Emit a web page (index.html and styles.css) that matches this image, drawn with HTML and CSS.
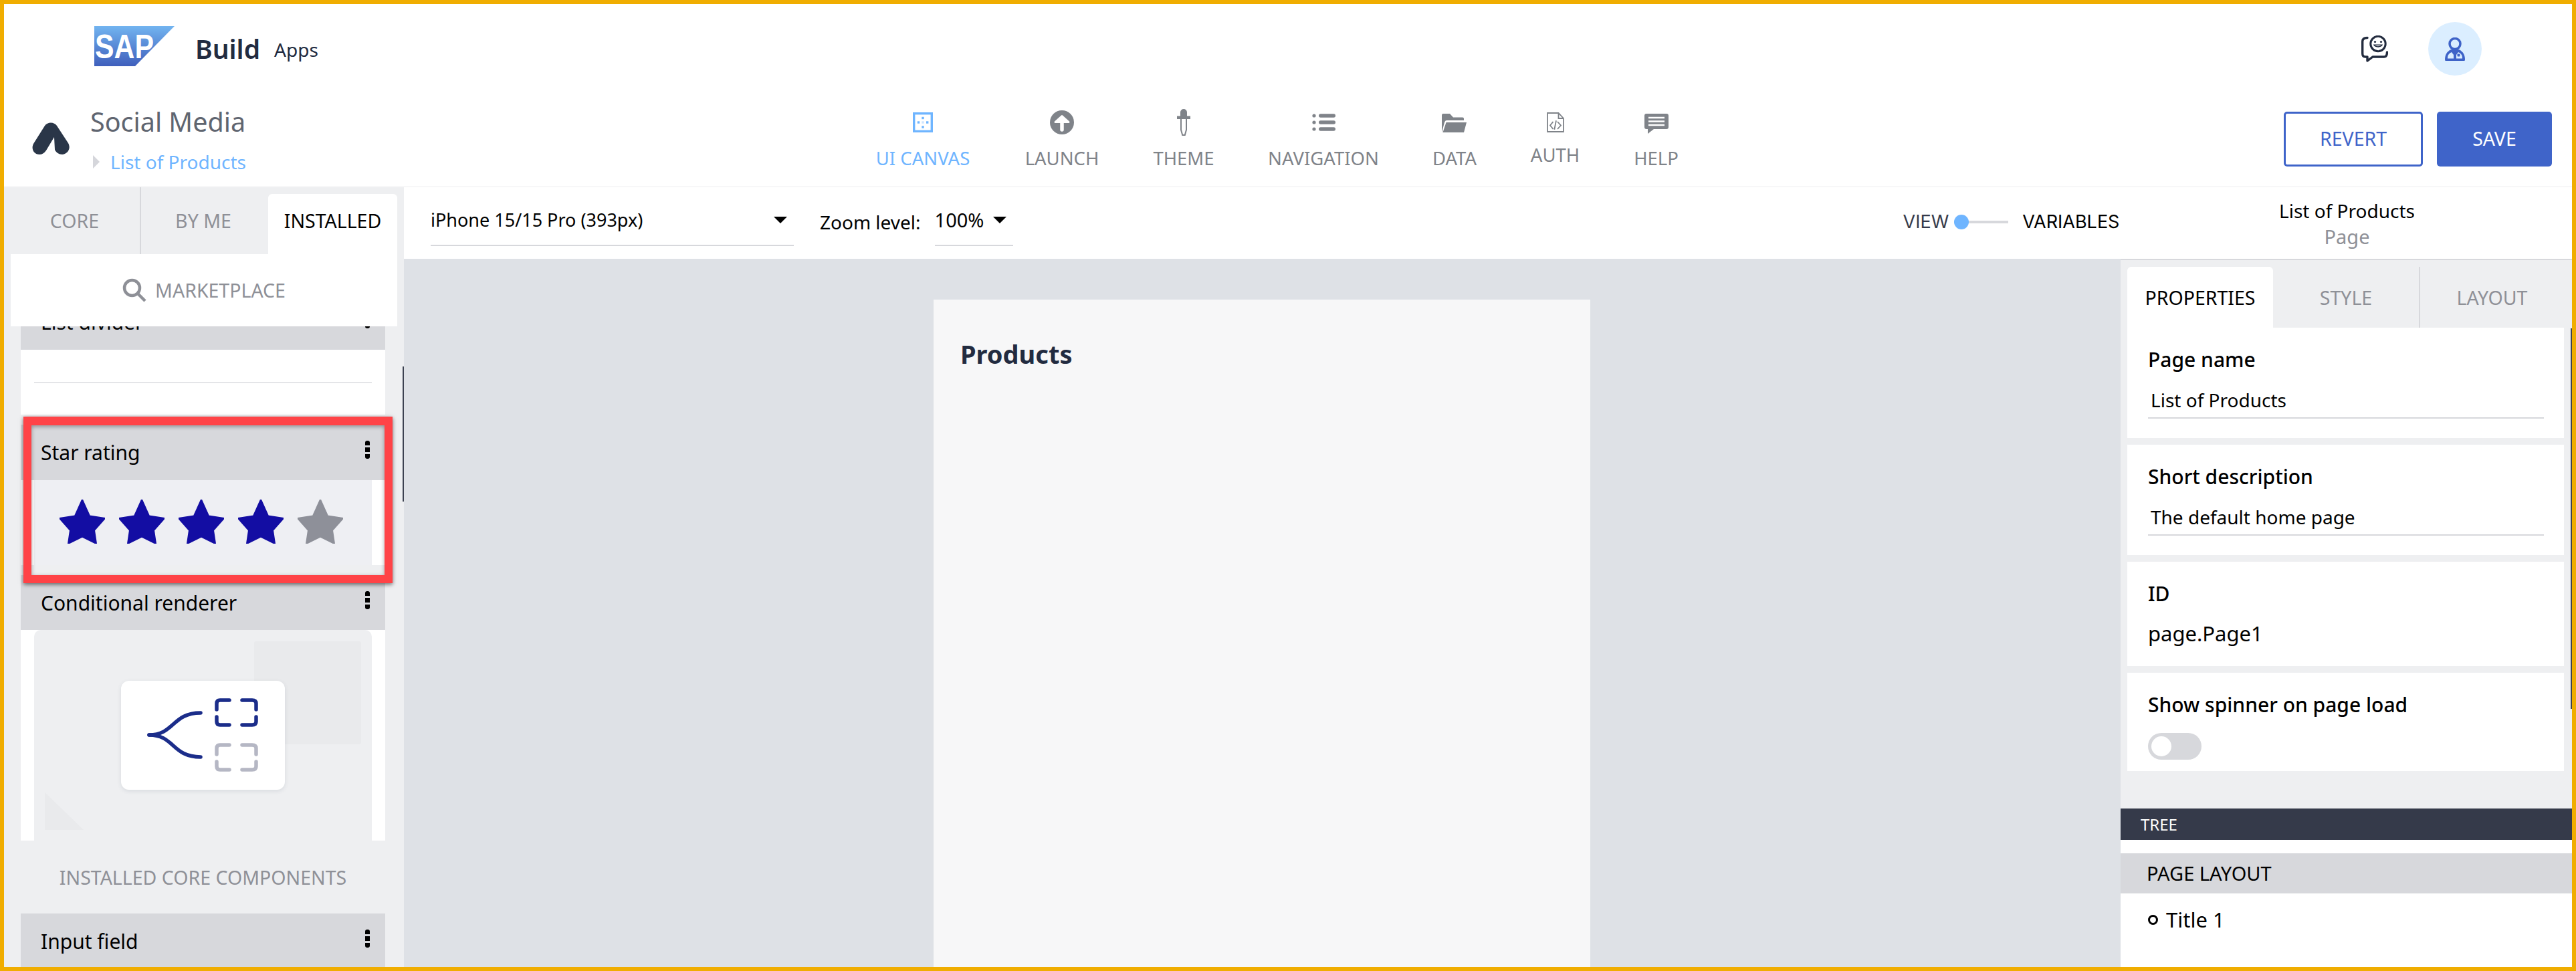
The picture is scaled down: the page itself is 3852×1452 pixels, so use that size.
FILE: index.html
```
<!DOCTYPE html>
<html lang="en">
<head>
<meta charset="utf-8">
<title>SAP Build Apps</title>
<link rel="stylesheet" href="styles.css">
</head>
<body>
<div class="app">
  <header class="brandbar">
    <svg class="sap-logo" viewBox="0 0 120 60" aria-hidden="true">
      <defs><linearGradient id="sapg" x1="0" y1="0" x2="0" y2="1"><stop offset="0" stop-color="#72b4f0"/><stop offset="1" stop-color="#3f5fbc"/></linearGradient></defs>
      <polygon points="0,0 120,0 61,60 0,60" fill="url(#sapg)"/>
      <text x="1" y="48" class="sap-text" textLength="88" lengthAdjust="spacingAndGlyphs">SAP</text>
    </svg>
    <span class="brand-build">Build</span>
    <span class="brand-apps">Apps</span>
    <svg class="chat-icon" viewBox="0 0 40 40" aria-hidden="true">
      <path d="M9 3.500 C4 3.500 1.700 5 1.700 9 V27 C1.700 30 3 32 6 32 H9 V38 L17 32 H34 C37 32 38.500 29 38.500 25" fill="none" stroke="#232c3f" stroke-width="3.400" stroke-linecap="round" stroke-linejoin="round"/>
      <circle cx="25" cy="12.500" r="11.200" fill="none" stroke="#232c3f" stroke-width="3"/>
      <circle cx="20.500" cy="9.500" r="1.600" fill="#232c3f"/><circle cx="29.500" cy="9.500" r="1.600" fill="#232c3f"/>
      <path d="M18 13.500 H32 C31 19 19 19 18 13.500 Z" fill="#232c3f"/>
      <path d="M20.500 15 H29.500 C28 16.500 22 16.500 20.500 15 Z" fill="#fff"/>
    </svg>
    <div class="avatar">
      <svg class="person-icon" viewBox="0 0 30 35" aria-hidden="true">
        <circle cx="15" cy="9.500" r="8" fill="none" stroke="#3e63c8" stroke-width="3.500"/>
        <path d="M1 35 Q0 35 0 33 C0 26 3 21 9 18 H21 C27 21 30 26 30 33 Q30 35 29 35 Z" fill="#3e63c8"/>
        <path d="M4 31.500 C4 26 6 24 10 22 L13 26 V31.500 Z" fill="#dbeeff"/>
        <path d="M17 26 L20 22 C24 24 26 26 26 31.500 H17 Z" fill="#dbeeff"/>
        <rect x="18.500" y="24.500" width="4" height="4" rx="1" fill="#3e63c8"/>
      </svg>
    </div>
  </header>

  <div class="projectbar">
    <svg class="app-logo" viewBox="0 0 56 48" aria-hidden="true">
      <path d="M19 5 C23 -1 33 -1 37 5 L54 31 C59 40 52 48 45 48 C40 48 36 45 34 41 L33 22 L21 42 C18 46 15 48 11 48 C3 48 -2 40 2 32 Z" fill="#2a3648"/>
    </svg>
    <div class="project-title">
      <div class="project-name">Social Media</div>
      <div class="project-page"><span class="crumb-arrow"></span><span>List of Products</span></div>
    </div>
    <nav class="mainnav">
      <a class="navitem navitem-canvas is-active">
        <svg class="navicon" width="30" height="30" viewBox="0 0 30 30" aria-hidden="true">
          <rect x="1.700" y="1.700" width="26.600" height="26.600" fill="#fff" stroke="#6fb5ff" stroke-width="3.400"/>
          <g fill="#6fb5ff">
            <rect x="13.300" y="6.800" width="3.400" height="3.400"/>
            <rect x="13.300" y="20.300" width="3.400" height="3.400"/>
            <rect x="6.800" y="13.300" width="3.400" height="3.400"/>
            <rect x="20" y="13.300" width="3.400" height="3.400"/>
          </g>
          <rect x="13.300" y="13.300" width="3.400" height="3.400" fill="#cfe5ff"/>
        </svg>
        <span>UI CANVAS</span>
      </a>
      <a class="navitem navitem-launch">
        <svg class="navicon" width="36" height="36" viewBox="0 0 36 36" aria-hidden="true">
          <circle cx="18" cy="18" r="18" fill="#7f8389"/>
          <path d="M18 8.500 L28 17.500 H8 Z" fill="#fff" stroke="#fff" stroke-width="3" stroke-linejoin="round"/>
          <path d="M18 15 V29" stroke="#fff" stroke-width="5.500" stroke-linecap="round"/>
          <path d="M12.500 19 L18 15 L23.500 19 Z" fill="#fff"/>
        </svg>
        <span>LAUNCH</span>
      </a>
      <a class="navitem navitem-theme">
        <svg class="navicon" width="20" height="40" viewBox="0 0 20 40" aria-hidden="true">
          <path d="M5 10.500 V5 A5 5 0 0 1 15 5 V10.500 H20 V15 H0 V10.500 Z" fill="#7f8389"/>
          <path d="M6 15 V31 L8.200 39 H11.800 L14 31 V15" fill="none" stroke="#7f8389" stroke-width="2"/>
        </svg>
        <span>THEME</span>
      </a>
      <a class="navitem navitem-nav">
        <svg class="navicon" width="35" height="26" viewBox="0 0 35 26" aria-hidden="true">
          <g fill="#7f8389">
            <circle cx="3" cy="3" r="2.600"/><rect x="10" y="0.300" width="25" height="5.400" rx="2.700"/>
            <circle cx="3" cy="13" r="2.600"/><rect x="10" y="10.300" width="25" height="5.400" rx="2.700"/>
            <circle cx="3" cy="23" r="2.600"/><rect x="10" y="20.300" width="25" height="5.400" rx="2.700"/>
          </g>
        </svg>
        <span>NAVIGATION</span>
      </a>
      <a class="navitem navitem-data">
        <svg class="navicon" width="38" height="28" viewBox="0 0 38 28" aria-hidden="true">
          <path d="M0 2 Q0 0 2 0 H12 L17 5.500 H31 Q33 5.500 33 7.500 V10 H7 Q5 10 4 13 L0 28 Z" fill="#7f8389"/>
          <path d="M6.500 13 H37 L33 28 H1.500 Z" fill="#7f8389"/>
        </svg>
        <span>DATA</span>
      </a>
      <a class="navitem navitem-auth">
        <svg class="navicon" width="26" height="30" viewBox="0 0 26 30" aria-hidden="true">
          <path d="M1 1 H17.500 L25 9 V29 H1 Z M17.500 1 V9 H25" fill="none" stroke="#7f8389" stroke-width="1.800"/>
          <path d="M9.500 14 L5 19.500 L9.500 25 M16 14 L21 19.500 L16 25 M14 12.300 L11.300 25.700" fill="none" stroke="#7f8389" stroke-width="1.800"/>
        </svg>
        <span>AUTH</span>
      </a>
      <a class="navitem navitem-help">
        <svg class="navicon" width="36" height="30" viewBox="0 0 36 30" aria-hidden="true">
          <path d="M3 0 H33 C35 0 36 1 36 3 V20 C36 22 35 23 33 23 H14 L5 30 V23 H3 C1 23 0 22 0 20 V3 C0 1 1 0 3 0 Z" fill="#7f8389"/>
          <path d="M6 6 H30 M6 11.500 H30 M6 17 H30" stroke="#fff" stroke-width="2.400"/>
        </svg>
        <span>HELP</span>
      </a>
    </nav>
    <div class="actions">
      <button class="btn btn-outline">REVERT</button>
      <button class="btn btn-solid">SAVE</button>
    </div>
  </div>

  <div class="work">
    <aside class="palette">
      <div class="palette-tabs">
        <div class="ptab ptab-core">CORE</div>
        <div class="ptab ptab-me">BY ME</div>
        <div class="ptab ptab-installed">INSTALLED</div>
      </div>
      <div class="marketplace">
        <svg class="search-icon" width="36" height="36" viewBox="0 0 36 36" aria-hidden="true">
          <circle cx="14.500" cy="14.500" r="11.500" fill="none" stroke="#8e9097" stroke-width="4.500"/>
          <path d="M23 23 L34 34" stroke="#8e9097" stroke-width="4.500"/>
        </svg>
        <span>MARKETPLACE</span>
      </div>
      <div class="palette-list">
        <div class="palette-scroll">
          <section class="comp">
            <div class="comp-head"><span>List divider</span><i class="kebab"></i></div>
            <div class="comp-body comp-body-divider"><hr class="divider-line"></div>
          </section>
          <section class="comp comp-star">
            <div class="highlight"></div>
            <div class="comp-head"><span>Star rating</span><i class="kebab"></i></div>
            <div class="comp-body">
              <div class="star-preview">
                <svg class="star" viewBox="0 0 68 66" aria-hidden="true"><path class="star-on" d="M34 0 L45 24.500 L68 28 L52 46 L55 66 L34 55.500 L13 66 L16 46 L0 28 L23 24.500 Z"/></svg>
                <svg class="star" viewBox="0 0 68 66" aria-hidden="true"><path class="star-on" d="M34 0 L45 24.500 L68 28 L52 46 L55 66 L34 55.500 L13 66 L16 46 L0 28 L23 24.500 Z"/></svg>
                <svg class="star" viewBox="0 0 68 66" aria-hidden="true"><path class="star-on" d="M34 0 L45 24.500 L68 28 L52 46 L55 66 L34 55.500 L13 66 L16 46 L0 28 L23 24.500 Z"/></svg>
                <svg class="star" viewBox="0 0 68 66" aria-hidden="true"><path class="star-on" d="M34 0 L45 24.500 L68 28 L52 46 L55 66 L34 55.500 L13 66 L16 46 L0 28 L23 24.500 Z"/></svg>
                <svg class="star" viewBox="0 0 68 66" aria-hidden="true"><path class="star-off" d="M34 0 L45 24.500 L68 28 L52 46 L55 66 L34 55.500 L13 66 L16 46 L0 28 L23 24.500 Z"/></svg>
              </div>
            </div>
          </section>
          <section class="comp comp-cond">
            <div class="comp-head comp-head-cond"><span>Conditional renderer</span><i class="kebab"></i></div>
            <div class="comp-body">
              <div class="cond-preview">
                <svg class="cond-art" width="505" height="314" viewBox="0 0 505 314" aria-hidden="true">
                  <rect x="329" y="17" width="160" height="154" rx="3" fill="#e9eaec"/>
                  <polygon points="16,243 16,299 74,299" fill="#e9eaec"/>
                </svg>
                <div class="cond-card">
                  <svg width="245" height="163" viewBox="0 0 245 163" aria-hidden="true">
                    <g fill="none" stroke-width="5.500" stroke-linecap="round">
                      <g stroke="#1b2d8a">
                        <path d="M42 81 C80 81 76 48 119 48"/>
                        <path d="M42 81 C80 81 76 114 119 114"/>
                        <path d="M162 29 H148 Q143 29 143 34 V43 M143 54 V61 Q143 66 148 66 H162 M181 29 H196 Q202 29 202 34 V43 M202 54 V61 Q202 66 196 66 H181"/>
                      </g>
                      <path stroke="#b5b7c4" d="M162 96 H148 Q143 96 143 101 V110 M143 121 V128 Q143 133 148 133 H162 M181 96 H196 Q202 96 202 101 V110 M202 121 V128 Q202 133 196 133 H181"/>
                    </g>
                  </svg>
                </div>
              </div>
            </div>
          </section>
          <div class="section-label">INSTALLED CORE COMPONENTS</div>
          <section class="comp">
            <div class="comp-head"><span>Input field</span><i class="kebab"></i></div>
          </section>
        </div>
      </div>
      <div class="palette-scrollbar"></div>
    </aside>

    <main class="editor">
      <div class="toolbar">
        <div class="select select-device"><span>iPhone 15/15 Pro (393px)</span><i class="caret"></i></div>
        <span class="zoom-label">Zoom level:</span>
        <div class="select select-zoom"><span>100%</span><i class="caret"></i></div>
        <div class="view-toggle">
          <span class="view-label">VIEW</span>
          <span class="slider"><i class="slider-dot"></i></span>
          <span class="vars-label">VARIABLES</span>
        </div>
        <div class="selection">
          <div class="selection-name">List of Products</div>
          <div class="selection-type">Page</div>
        </div>
      </div>
      <div class="stage">
        <div class="canvas">
          <div class="phone"><h1 class="phone-title">Products</h1></div>
        </div>
        <aside class="inspector">
          <div class="itabs">
            <div class="itab itab-on">PROPERTIES</div>
            <div class="itab itab-style">STYLE</div>
            <div class="itab itab-layout">LAYOUT</div>
          </div>
          <div class="cards">
            <div class="card card-name">
              <div class="card-label">Page name</div>
              <div class="field">List of Products</div>
            </div>
            <div class="card card-name">
              <div class="card-label">Short description</div>
              <div class="field">The default home page</div>
            </div>
            <div class="card card-id">
              <div class="card-label">ID</div>
              <div class="plain-value">page.Page1</div>
            </div>
            <div class="card card-spin">
              <div class="card-label">Show spinner on page load</div>
              <div class="toggle"><i class="knob"></i></div>
            </div>
          </div>
          <div class="tree">
            <div class="tree-bar">TREE</div>
            <div class="tree-head">PAGE LAYOUT</div>
            <div class="tree-row"><i class="tree-dot"></i><span>Title 1</span></div>
          </div>
          <div class="inspector-scrollbar"></div>
        </aside>
      </div>
    </main>
  </div>
</div>
</body>
</html>
```

FILE: styles.css
```
* { box-sizing: border-box; }
html, body { margin: 0; padding: 0; background: #fff; }
body { font-family: "Noto Sans", "Liberation Sans", sans-serif; color: #000; }

.app {
  width: 3852px;
  height: 1452px;
  border: 6px solid #f0ad00;
  overflow: hidden;
  display: flex;
  flex-direction: column;
  background: #fff;
}

/* brand bar */
.brandbar {
  height: 124px;
  flex: none;
  display: flex;
  align-items: flex-start;
  padding-left: 135px;
}
.sap-logo { width: 120px; height: 60px; margin-top: 33px; flex: none; }
.sap-text { font-family: "Liberation Sans", sans-serif; font-weight: 700; font-size: 50px; fill: #fff; }
.brand-build { font-size: 39px; font-weight: 600; color: #222b40; margin-left: 31px; margin-top: 42px; line-height: 50px; }
.brand-apps { font-size: 28px; color: #222b40; margin-left: 21px; margin-top: 48px; line-height: 40px; }
.chat-icon { width: 40px; height: 40px; margin-left: auto; margin-top: 47px; flex: none; }
.avatar {
  width: 80px; height: 80px; border-radius: 50%;
  background: #dbeeff;
  margin: 27px 135px 0 60px;
  display: flex; align-items: center; justify-content: center;
  flex: none;
}
.person-icon { width: 30px; height: 35px; }

/* project bar */
.projectbar {
  height: 148px;
  flex: none;
  display: flex;
  position: relative;
  align-items: flex-start;
  padding-left: 42px;
}
.app-logo { width: 56px; height: 48px; margin-top: 53px; flex: none; }
.project-title { margin-left: 31px; margin-top: 26px; width: 300px; flex: none; }
.project-name { font-size: 39.5px; line-height: 52px; color: #5f6570; }
.project-page { display: flex; align-items: center; margin-top: 14px; font-size: 28px; line-height: 40px; color: #6fb5ff; padding-left: 4px; }
.crumb-arrow {
  width: 0; height: 0;
  border-left: 10px solid #d5d6db;
  border-top: 10px solid transparent;
  border-bottom: 10px solid transparent;
  margin-right: 16px;
}
.mainnav { display: flex; margin-left: 872px; align-items: flex-start; }
.navitem {
  display: flex; flex-direction: column; align-items: center;
  font-size: 27.5px; line-height: 38px; color: #7f8389;
  white-space: nowrap;
}
.navitem.is-active { color: #6fb5ff; }
.navicon { display: block; flex: none; }
.navitem-canvas { width: 146px; padding-top: 38px; }
.navitem-canvas span { margin-top: 20px; }
.navitem-launch { width: 110px; margin-left: 80px; padding-top: 35px; }
.navitem-launch span { margin-top: 17px; }
.navitem-theme { width: 92px; margin-left: 81px; padding-top: 33px; }
.navitem-theme span { margin-top: 15px; }
.navitem-nav { width: 160px; margin-left: 83px; padding-top: 40px; }
.navitem-nav span { margin-top: 22px; }
.navitem-data { width: 64px; margin-left: 84px; padding-top: 40px; }
.navitem-data span { margin-top: 20px; }
.navitem-auth { width: 71px; margin-left: 83px; padding-top: 38px; }
.navitem-auth span { margin-top: 15px; }
.navitem-help { width: 67px; margin-left: 82px; padding-top: 40px; }
.navitem-help span { margin-top: 18px; }

.actions { margin-left: auto; display: flex; gap: 21px; margin-top: 37px; margin-right: 30px; }
.btn {
  height: 82px; border-radius: 5px; font-family: inherit; font-size: 28.5px;
  display: flex; align-items: center; justify-content: center;
  padding: 0 0 3px;
}
.btn-outline { width: 208px; background: #fff; border: 3px solid #3f64c9; color: #3f64c9; }
.btn-solid { width: 172px; background: #3f64c9; border: none; color: #fff; }

/* work */
.work { flex: 1; min-height: 0; display: flex; border-top: 2px solid #f7f7f8; }

/* palette */
.palette {
  width: 598px; flex: none;
  background: #eeeff1;
  display: flex; flex-direction: column;
  position: relative;
}
.palette-tabs { height: 100px; flex: none; display: flex; }
.ptab {
  display: flex; align-items: center; justify-content: center;
  font-size: 28.5px; color: #8e9097;
}
.ptab-core { width: 205px; border-right: 2px solid #d7d8dc; padding-left: 8px; }
.ptab-me { width: 190px; padding-right: 4px; }
.ptab-installed {
  width: 193px; margin-top: 10px; padding-bottom: 10px; background: #fff; color: #000;
  border-radius: 6px 6px 0 0;
}
.marketplace {
  height: 108px; flex: none; margin: 0 10px;
  background: #fff;
  display: flex; align-items: center; justify-content: center;
  font-size: 28.5px; color: #8e9097;
  gap: 13px;
  position: relative; z-index: 2;
}
.palette-list { flex: 1; min-height: 0; overflow: hidden; padding: 0 28px 0 25px; }
.palette-scroll { margin-top: -48px; }
.comp { position: relative; }
.comp-star { margin-top: 15px; }
.comp-cond { margin-top: 15px; }
.comp-head {
  height: 83px;
  background: #d7d8dc;
  display: flex; align-items: center; justify-content: space-between;
  padding: 0 23px 0 30px;
  font-size: 30px; color: #000;
}
.comp-head-cond { height: 82px; }
.kebab {
  width: 7px; height: 27px; margin-top: -8px; display: block;
  background: linear-gradient(#000 0 7px, transparent 7px 10px, #000 10px 17px, transparent 17px 20px, #000 20px 27px);
  border-radius: 3px;
}
.comp-body { background: #fff; padding: 0 20px; }
.comp-body-divider { height: 97px; display: flex; align-items: center; }
.divider-line { width: 100%; height: 2px; margin: 0; border: 0; background: #e4e5e8; }
.star-preview {
  height: 127px; background: #eeeff3;
  display: flex; padding: 29px 0 0 38px; gap: 21px;
}
.star { width: 68px; height: 66px; flex: none; }
.star-on { fill: #130da3; stroke: #130da3; stroke-width: 2; stroke-linejoin: round; }
.star-off { fill: #8e9099; stroke: #8e9099; stroke-width: 2; stroke-linejoin: round; }
.highlight {
  position: absolute; top: -12px; left: 4px;
  width: 552px; height: 249px;
  border: 12px solid #ff4347;
  border-top-width: 13px;
  box-shadow: 0 2px 6px rgba(0,0,0,.55), inset 0 2px 6px rgba(0,0,0,.35);
  z-index: 1;
}
.cond-preview {
  height: 315px; background: #eeeff1;
  border-radius: 10px 10px 0 0;
  position: relative;
  display: flex; align-items: center; justify-content: center;
}
.cond-art { position: absolute; left: 0; top: 0; }
.cond-card {
  position: relative; width: 245px; height: 163px; margin-top: 0;
  background: #fff; border-radius: 12px;
  box-shadow: 0 2px 6px rgba(60,70,100,.12);
}
.cond-card svg { display: block; }
.section-label {
  height: 109px; display: flex; align-items: center; justify-content: center;
  font-size: 28.5px; color: #8e9097;
}
.palette-scrollbar {
  position: absolute; right: 0; top: 268px;
  width: 2px; height: 202px; background: #3c4150;
}

/* editor */
.editor { flex: 1; min-width: 0; display: flex; flex-direction: column; }
.toolbar {
  height: 107px; flex: none;
  display: flex; align-items: flex-start;
  font-size: 27px; line-height: 38px; background: #fff;
}
.select {
  display: flex; justify-content: space-between; align-items: flex-start;
  height: 88px; border-bottom: 2px solid #d7d8dc; padding-top: 30px;
}
.select-device { width: 543px; margin-left: 40px; padding-right: 10px; }
.select-zoom { width: 117px; margin-left: 21px; padding-right: 10px; font-size: 29px; }
.caret {
  width: 0; height: 0; display: block; margin-top: 14px;
  border-left: 10px solid transparent;
  border-right: 10px solid transparent;
  border-top: 10px solid #000;
}
.zoom-label { margin-left: 39px; margin-top: 33px; font-size: 28px; }
.view-toggle { display: flex; align-items: center; margin-left: 1331px; margin-top: 33px; color: #000; font-family: "Inter", sans-serif; font-size: 27px; }
.view-label { color: #353a4a; }
.slider { display: block; width: 81px; height: 4px; background: #d7d8dc; margin-left: 8px; position: relative; }
.slider-dot { position: absolute; left: 0; top: -9px; width: 22px; height: 22px; border-radius: 50%; background: #6fb5ff; }
.vars-label { margin-left: 21px; }
.selection { margin-left: auto; width: 243px; margin-right: 215px; padding-top: 15px; text-align: center; }
.selection-name { font-size: 28px; line-height: 40px; }
.selection-type { font-size: 29px; line-height: 38px; color: #8e9097; }

.stage { flex: 1; min-height: 0; display: flex; }
.canvas { flex: 1; min-width: 0; background: #dee1e6; padding: 61px 0 0 792px; }
.phone { width: 982px; height: 1200px; background: #f7f7f8; padding: 56px 40px; }
.phone-title { margin: 0; font-size: 38px; line-height: 50px; font-weight: 700; color: #222b40; }

/* inspector */
.inspector {
  width: 675px; flex: none; background: #eeeff1;
  border-top: 2px solid #d7d8dc;
  display: flex; flex-direction: column;
  position: relative;
}
.itabs { height: 101px; flex: none; display: flex; padding: 10px 0 0 10px; }
.itab {
  display: flex; align-items: center; justify-content: center;
  font-size: 28.5px; color: #8e9097;
}
.itab-on { width: 218px; background: #fff; color: #000; border-radius: 6px 6px 0 0; }
.itab-style { width: 220px; border-right: 2px solid #d7d8dc; }
.itab-layout { flex: 1; padding-right: 12px; }
.cards { display: flex; flex-direction: column; gap: 10px; padding: 0 12px 0 10px; }
.card { background: #fff; padding-left: 31px; padding-right: 30px; }
.card-name { height: 165px; }
.card-id { height: 156px; }
.card-spin { height: 147px; }
.card-label { font-size: 30px; line-height: 40px; font-weight: 500; padding-top: 28px; box-sizing: content-box; }
.field { margin-top: 20px; height: 48px; font-size: 28px; line-height: 40px; padding-left: 4px; border-bottom: 2px solid #d7d8dc; }
.plain-value { margin-top: 19px; font-size: 31px; line-height: 40px; }
.toggle { width: 80px; height: 40px; border-radius: 20px; background: #d7d8dc; margin-top: 22px; padding: 5px; }
.knob { display: block; width: 30px; height: 30px; border-radius: 50%; background: #fff; }
.tree { margin-top: 56px; flex: 1; background: #fff; }
.tree-bar { height: 47px; background: #353a4a; color: #fff; font-size: 24px; line-height: 47px; padding-left: 30px; }
.tree-head { height: 60px; margin-top: 20px; background: #d7d8dc; font-size: 29px; line-height: 60px; padding-left: 39px; }
.tree-row { display: flex; align-items: center; padding: 17px 0 0 41px; font-size: 31px; line-height: 44px; }
.tree-dot { width: 15px; height: 15px; border: 3px solid #000; border-radius: 50%; margin-right: 12px; }
.inspector-scrollbar { position: absolute; right: 0; top: 102px; width: 2px; height: 569px; background: #3c4150; }
```
